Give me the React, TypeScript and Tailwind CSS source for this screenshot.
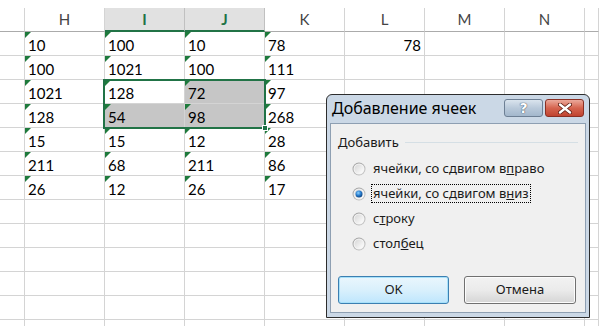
import React from 'react';

const cols = ['G', 'H', 'I', 'J', 'K', 'L', 'M', 'N', 'O'];

// values as text (green triangle), by column
const data: Record<string, string[]> = {
  H: ['10', '100', '1021', '128', '15', '211', '26'],
  I: ['100', '1021', '128', '54', '15', '68', '12'],
  J: ['10', '100', '72', '98', '12', '211', '26'],
  K: ['78', '111', '97', '268', '28', '86', '17'],
};

const grayCells = new Set(['J3', 'I4', 'J4']);
const ROWS = 13;

const Triangle = () => (
  <span className="absolute left-0 top-0 h-0 w-0 border-t-[6px] border-r-[6px] border-t-[#1e7a3c] border-r-transparent" />
);

const Cell = ({ col, row }: { col: string; row: number }) => {
  const v = data[col]?.[row - 1];
  const gray = grayCells.has(`${col}${row}`);
  return (
    <div
      className={`relative flex h-[24px] items-end border-b border-r border-[#d4d4d4] pb-[1px] pl-[3px] ${
        gray ? 'bg-[#c6c6c6]' : 'bg-white'
      }`}
    >
      {v && <Triangle />}
      {v && <span className="leading-[18px]">{v}</span>}
      {col === 'L' && row === 1 && <span className="ml-auto pr-[3px] leading-[18px]">78</span>}
    </div>
  );
};

const Radio = ({ checked }: { checked?: boolean }) => (
  <svg width="14" height="14" viewBox="0 0 14 14" className="shrink-0">
    <defs>
      <linearGradient id="rb" x1="0" y1="0" x2="1" y2="1">
        <stop offset="0" stopColor="#9c9c9c" />
        <stop offset="1" stopColor="#c9c9c9" />
      </linearGradient>
      <linearGradient id="ri" x1="0" y1="0" x2="1" y2="1">
        <stop offset="0" stopColor="#d6d6d6" />
        <stop offset="1" stopColor="#ffffff" />
      </linearGradient>
      <radialGradient id="rd" cx="0.4" cy="0.35" r="0.7">
        <stop offset="0" stopColor="#8fd3ff" />
        <stop offset="0.5" stopColor="#2a7fd0" />
        <stop offset="1" stopColor="#0c3f7a" />
      </radialGradient>
    </defs>
    <circle cx="7" cy="7" r="6.5" fill="url(#rb)" />
    <circle cx="7" cy="7" r="5.5" fill="#f4f4f4" />
    <circle cx="7" cy="7" r="4.5" fill="url(#ri)" />
    {checked && <circle cx="7" cy="7" r="3.5" fill="url(#rd)" />}
  </svg>
);

const RadioRow = ({ checked, focus, children }: { checked?: boolean; focus?: boolean; children: React.ReactNode }) => (
  <div className="flex h-[25px] items-center gap-[6px]">
    <Radio checked={checked} />
    <span className={`px-[1px] leading-[17px] ${focus ? 'outline outline-1 outline-dotted outline-black' : ''}`}>
      {children}
    </span>
  </div>
);

const Dialog = () => (
  <div
    className="absolute left-[326px] top-[94px] flex h-[224px] w-[264px] flex-col rounded-t-[6px] border border-[#2d2d2d] bg-[#cbd8e6]"
    style={{ fontFamily: '"Noto Sans", "Open Sans", sans-serif' }}
  >
    {/* title bar */}
    <div className="flex h-[28px] items-start">
      <div className="pl-[5px] pt-[3px] text-[16px] leading-[20px] text-black">Добавление ячеек</div>
      <div className="ml-auto mr-[5px] mt-[4px] flex gap-[2px]">
        <div className="flex h-[18px] w-[39px] items-center justify-center rounded-[3px] border border-[#6d7f94] bg-gradient-to-b from-[#dae4ee] via-[#b9c9da] to-[#a3b7cc]">
          <span
            className="text-[14px] font-bold leading-none text-white"
            style={{ fontFamily: '"DejaVu Sans", sans-serif', textShadow: '0 0 1px #384a5e, 0 0 1px #384a5e' }}
          >
            ?
          </span>
        </div>
        <div className="flex h-[18px] w-[39px] items-center justify-center rounded-[3px] border border-[#8a2f23] bg-gradient-to-b from-[#eaa99b] via-[#d5644f] to-[#c04330]">
          <svg width="14" height="11" viewBox="0 0 14 11">
            <path d="M2 1.5 L12 9.5 M12 1.5 L2 9.5" stroke="#5a1a10" strokeWidth="4" strokeLinecap="round" />
            <path d="M2 1.5 L12 9.5 M12 1.5 L2 9.5" stroke="#ffffff" strokeWidth="2.4" strokeLinecap="round" />
          </svg>
        </div>
      </div>
    </div>
    {/* client area */}
    <div className="mx-[3px] mb-[4px] flex flex-1 flex-col border border-[#8e9fb2] bg-[#f0f0f0] px-[7px] text-[13px] text-[#1a1a1a]">
      <div className="mt-[9px] flex items-center gap-[6px]">
        <span className="leading-[18px]">Добавить</span>
        <div className="flex-1 border-t border-[#d5dfe5] border-b-white" />
      </div>
      <div className="mt-[5px] flex flex-col pl-[14px]">
        <RadioRow>
          ячейки, со сдвигом в<u>п</u>раво
        </RadioRow>
        <RadioRow checked focus>
          ячейки, со сдвигом в<u>н</u>из
        </RadioRow>
        <RadioRow>
          с<u>т</u>року
        </RadioRow>
        <RadioRow>
          стол<u>б</u>ец
        </RadioRow>
      </div>
      <div className="mt-auto mb-[8px] flex justify-between pr-[2px]">
        <button className="h-[28px] w-[111px] rounded-[3px] border border-[#3c7fb1] bg-gradient-to-b from-[#eaf6fd] via-[#d9f0fc] to-[#bee6fd] shadow-[inset_0_0_0_1px_#a7e1fa] text-[13px]">
          OK
        </button>
        <button className="h-[28px] w-[112px] rounded-[3px] border border-[#707070] bg-gradient-to-b from-[#f2f2f2] via-[#ebebeb] to-[#d5d5d5] shadow-[inset_0_0_0_1px_#fcfcfc] text-[13px]">
          Отмена
        </button>
      </div>
    </div>
  </div>
);

export default function App() {
  return (
    <div
      className="relative h-[326px] w-[599px] overflow-hidden bg-white text-[15px] text-black"
      style={{ fontFamily: 'Lato, "Noto Sans", sans-serif' }}
    >
      <div className="h-[8px]" />
      <div className="grid grid-cols-[25px_repeat(7,80px)_1fr]">
        {cols.map((c) => {
          const sel = c === 'I' || c === 'J';
          return (
            <div
              key={c}
              className={`flex h-[24px] items-center justify-center border-r ${
                sel
                  ? 'border-b-2 border-r-[#c0c0c0] border-b-[#217346] bg-[#e1e1e1] font-bold text-[#217346]'
                  : 'border-b border-r-[#d4d4d4] border-b-[#ababab] text-[#444]'
              }`}
            >
              {c === 'G' || c === 'O' ? '' : c}
            </div>
          );
        })}
        {Array.from({ length: ROWS }, (_, i) => i + 1).map((r) =>
          cols.map((c) => <Cell key={`${c}${r}`} col={c} row={r} />)
        )}
      </div>
      {/* selection I3:J4 */}
      <div className="pointer-events-none absolute left-[103px] top-[79px] h-[50px] w-[163px] border-2 border-[#217346]" />
      <div className="absolute left-[262px] top-[125px] h-[6px] w-[6px] border border-white bg-[#217346]" />
      <Dialog />
    </div>
  );
}
